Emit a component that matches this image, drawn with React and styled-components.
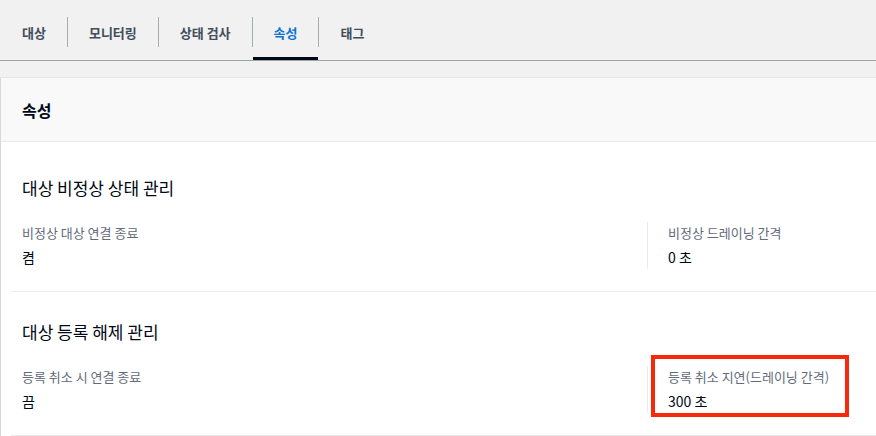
import { Fragment } from 'react'
import styled, { createGlobalStyle } from 'styled-components'

const GlobalStyle = createGlobalStyle`
  body {
    margin: 0;
    background: #f0f1f0;
    font-family: "Noto Sans CJK KR", "Noto Sans", sans-serif;
    color: #000716;
    overflow: hidden;
  }
`

const TabBar = styled.div`
  display: flex;
  align-items: center;
  height: 60px;
  padding-left: 1px;
  border-bottom: 1px solid #9ba5a5;
`

const Tab = styled.div`
  display: flex;
  align-items: center;
  box-sizing: border-box;
  height: 60px;
  padding: 7px 21px 0;
  font-size: 13px;
  font-weight: 700;
  color: ${props => props.active ? '#0972d3' : '#414d5c'};
  border-bottom: 3px solid ${props => props.active ? '#000716' : 'transparent'};
`

const TabDivider = styled.span`
  width: 1px;
  height: 30px;
  margin-top: 4px;
  background: #a4aeae;
`

const Panel = styled.div`
  margin-top: 16px;
  background: #fff;
  border-left: 1px solid #d5d9da;
  border-top: 1px solid #e4e6e6;
`

const PanelHeader = styled.div`
  display: flex;
  align-items: center;
  height: 63px;
  padding-left: 21px;
  background: #f9f9f9;
  border-bottom: 1px solid #e6e8e9;
  font-size: 16px;
  font-weight: 700;
`

const PanelBody = styled.div`
  padding: 6px 0 0 10px;
`

const Section = styled.section`
  padding: 28px 0 22px 11px;
  border-bottom: 1px solid #e9ebed;
`

const SectionTitle = styled.h2`
  margin: 0 0 22px;
  font-size: 17px;
  font-weight: 400;
  line-height: 24px;
`

const Grid = styled.div`
  display: grid;
  grid-template-columns: 625px 1fr;
`

const Cell = styled.div`
  position: relative;
  padding: 2px 20px 2px ${props => props.divided ? '20px' : '0'};
  border-left: ${props => props.divided ? '1px solid #e9ebed' : 'none'};
`

const Label = styled.div`
  font-size: 13px;
  line-height: 18px;
  color: #5f6b7a;
`

const Value = styled.div`
  margin-top: 5px;
  font-size: 14px;
  line-height: 20px;
  color: #000716;
`

const Highlight = styled.div`
  position: absolute;
  left: 3px;
  top: -11px;
  width: 198px;
  height: 62px;
  box-sizing: border-box;
  border: 4px solid #f8280a;
  pointer-events: none;
`

const tabs = ['대상', '모니터링', '상태 검사', '속성', '태그']

const sections = [
  {
    title: '대상 비정상 상태 관리',
    items: [
      { label: '비정상 대상 연결 종료', value: '켬' },
      { label: '비정상 드레이닝 간격', value: '0 초' }
    ]
  },
  {
    title: '대상 등록 해제 관리',
    items: [
      { label: '등록 취소 시 연결 종료', value: '끔' },
      { label: '등록 취소 지연(드레이닝 간격)', value: '300 초', highlight: true }
    ]
  }
]

const App = () => {
  return (
    <Fragment>
      <GlobalStyle />
      <TabBar>
        {tabs.map((t, i) => (
          <Fragment key={t}>
            {i > 0 && <TabDivider />}
            <Tab active={t === '속성'}>{t}</Tab>
          </Fragment>
        ))}
      </TabBar>
      <Panel>
        <PanelHeader>속성</PanelHeader>
        <PanelBody>
          {sections.map(s => (
            <Section key={s.title}>
              <SectionTitle>{s.title}</SectionTitle>
              <Grid>
                {s.items.map((item, i) => (
                  <Cell key={item.label} divided={i > 0}>
                    <Label>{item.label}</Label>
                    <Value>{item.value}</Value>
                    {item.highlight && <Highlight />}
                  </Cell>
                ))}
              </Grid>
            </Section>
          ))}
        </PanelBody>
      </Panel>
    </Fragment>
  )
}

export default App
